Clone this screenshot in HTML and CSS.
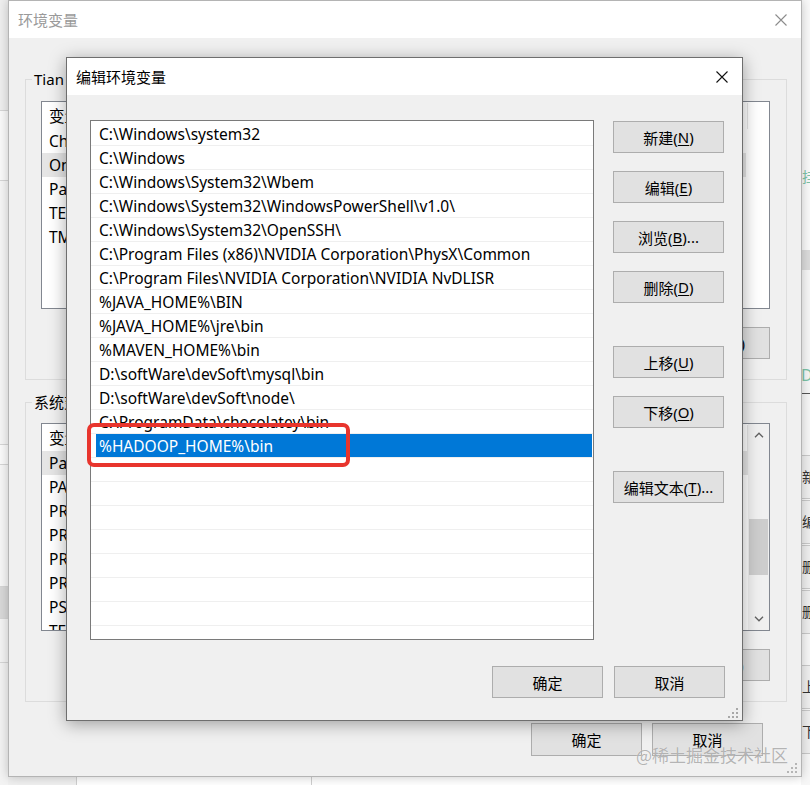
FILE: index.html
```html
<!DOCTYPE html>
<html lang="zh-CN">
<head>
<meta charset="utf-8">
<title>编辑环境变量</title>
<link rel="stylesheet" href="styles.css">
</head>
<body>
<div class="desktop">
  <div class="bg-left">
    <div class="bl bl-1"></div>
    <div class="bl bl-2"></div>
    <div class="bl bl-3"></div>
    <div class="bl bl-4"></div>
    <div class="bl bl-5"></div>
    <div class="bl bl-6"></div>
    <div class="bl bl-7"></div>
  </div>
  <div class="bg-mid">
    <div class="bg-bottom">
      <div class="bb-a"></div>
      <div class="bb-b"></div>
      <div class="bb-c"></div>
    </div>
  </div>
  <div class="bg-right">
    <div class="br br-top"></div>
    <div class="br br-green">挂</div>
    <div class="br br-band"></div>
    <div class="br br-gap"></div>
    <div class="br br-green2">D:</div>
    <div class="br br-dark"></div>
    <div class="br br-btn">新建</div>
    <div class="br br-btn">编辑</div>
    <div class="br br-btn">删除</div>
    <div class="br br-btn">删除</div>
    <div class="br br-gap2"></div>
    <div class="br br-btn">上移</div>
    <div class="br br-btn">下移</div>
  </div>
</div>

<div class="win outer">
  <div class="titlebar">
    <span class="title inactive">环境变量</span>
    <svg class="close" width="12" height="12" viewBox="0 0 12 12"><path d="M0.5 0.5 L11.5 11.5 M11.5 0.5 L0.5 11.5" stroke="#8c8c8c" stroke-width="1.1" fill="none"/></svg>
  </div>
  <div class="obody">
    <fieldset class="group g1">
      <legend>Tian 的用户变量(<u>U</u>)</legend>
      <div class="lv">
        <div class="lv-head"><span class="c1">变量</span><span class="c2">值</span></div>
        <div class="lv-rows">
          <div class="lv-row"><span class="c1">ChocolateyLastPathUpdate</span></div>
          <div class="lv-row hl"><span class="c1">OneDrive</span></div>
          <div class="lv-row"><span class="c1">Path</span></div>
          <div class="lv-row"><span class="c1">TEMP</span></div>
          <div class="lv-row"><span class="c1">TMP</span></div>
        </div>
      </div>
      <div class="btnrow">
        <button class="btn obtn">新建(<u>N</u>)...</button>
        <button class="btn obtn">编辑(<u>E</u>)...</button>
        <button class="btn obtn">删除(<u>D</u>)</button>
      </div>
    </fieldset>
    <fieldset class="group g2">
      <legend>系统变量(<u>S</u>)</legend>
      <div class="lv lv2">
        <div class="lv-main">
          <div class="lv-head"><span class="c1">变量</span><span class="c2">值</span></div>
          <div class="lv-rows">
            <div class="lv-row hl"><span class="c1">Path</span></div>
            <div class="lv-row"><span class="c1">PATHEXT</span></div>
            <div class="lv-row"><span class="c1">PROCESSOR_ARCHITECTURE</span></div>
            <div class="lv-row"><span class="c1">PROCESSOR_IDENTIFIER</span></div>
            <div class="lv-row"><span class="c1">PROCESSOR_LEVEL</span></div>
            <div class="lv-row"><span class="c1">PROCESSOR_REVISION</span></div>
            <div class="lv-row"><span class="c1">PSModulePath</span></div>
            <div class="lv-row"><span class="c1">TEMP</span></div>
          </div>
        </div>
        <div class="vscroll">
          <svg class="arrow" width="10" height="6" viewBox="0 0 10 6"><path d="M1 5.2 L5 1.2 L9 5.2" stroke="#606060" stroke-width="1.3" fill="none"/></svg>
          <div class="track"><div class="thumb"></div></div>
          <svg class="arrow" width="10" height="6" viewBox="0 0 10 6"><path d="M1 0.8 L5 4.8 L9 0.8" stroke="#606060" stroke-width="1.3" fill="none"/></svg>
        </div>
      </div>
      <div class="btnrow">
        <button class="btn obtn">新建(<u>W</u>)...</button>
        <button class="btn obtn">编辑(<u>I</u>)...</button>
        <button class="btn obtn">删除(<u>L</u>)</button>
      </div>
    </fieldset>
    <div class="ofoot">
      <button class="btn">确定</button>
      <button class="btn">取消</button>
    </div>
  </div>
  <svg class="grip ogrip" width="11" height="11" viewBox="0 0 11 11"><g fill="#b5b5b5"><rect x="8" y="0" width="2" height="2"/><rect x="4" y="4" width="2" height="2"/><rect x="8" y="4" width="2" height="2"/><rect x="0" y="8" width="2" height="2"/><rect x="4" y="8" width="2" height="2"/><rect x="8" y="8" width="2" height="2"/></g></svg>
</div>

<div class="win inner">
  <div class="titlebar">
    <span class="title">编辑环境变量</span>
    <svg class="close" width="12" height="12" viewBox="0 0 12 12"><path d="M0.5 0.5 L11.5 11.5 M11.5 0.5 L0.5 11.5" stroke="#111" stroke-width="1.1" fill="none"/></svg>
  </div>
  <div class="ibody">
    <div class="imain">
      <div class="plist">
        <div class="prow"><span>C:\Windows\system32</span></div>
        <div class="prow"><span>C:\Windows</span></div>
        <div class="prow"><span>C:\Windows\System32\Wbem</span></div>
        <div class="prow"><span>C:\Windows\System32\WindowsPowerShell\v1.0\</span></div>
        <div class="prow"><span>C:\Windows\System32\OpenSSH\</span></div>
        <div class="prow"><span>C:\Program Files (x86)\NVIDIA Corporation\PhysX\Common</span></div>
        <div class="prow"><span>C:\Program Files\NVIDIA Corporation\NVIDIA NvDLISR</span></div>
        <div class="prow"><span>%JAVA_HOME%\BIN</span></div>
        <div class="prow"><span>%JAVA_HOME%\jre\bin</span></div>
        <div class="prow"><span>%MAVEN_HOME%\bin</span></div>
        <div class="prow"><span>D:\softWare\devSoft\mysql\bin</span></div>
        <div class="prow"><span>D:\softWare\devSoft\node\</span></div>
        <div class="prow"><span>C:\ProgramData\chocolatey\bin</span></div>
        <div class="prow sel"><span>%HADOOP_HOME%\bin</span></div>
        <div class="prow"><span></span></div>
        <div class="prow"><span></span></div>
        <div class="prow"><span></span></div>
        <div class="prow"><span></span></div>
        <div class="prow"><span></span></div>
        <div class="prow"><span></span></div>
        <div class="prow"><span></span></div>
        <div class="prow"><span></span></div>
      </div>
      <div class="side">
        <div class="sgroup">
          <button class="btn">新建(<u>N</u>)</button>
          <button class="btn">编辑(<u>E</u>)</button>
          <button class="btn">浏览(<u>B</u>)...</button>
          <button class="btn">删除(<u>D</u>)</button>
        </div>
        <div class="sgroup">
          <button class="btn">上移(<u>U</u>)</button>
          <button class="btn">下移(<u>O</u>)</button>
        </div>
        <div class="sgroup">
          <button class="btn">编辑文本(<u>T</u>)...</button>
        </div>
      </div>
    </div>
    <div class="ifoot">
      <button class="btn">确定</button>
      <button class="btn">取消</button>
    </div>
  </div>
  <div class="mark"></div>
  <svg class="grip igrip" width="11" height="11" viewBox="0 0 11 11"><g fill="#a8a8a8"><rect x="8" y="0" width="2" height="2"/><rect x="4" y="4" width="2" height="2"/><rect x="8" y="4" width="2" height="2"/><rect x="0" y="8" width="2" height="2"/><rect x="4" y="8" width="2" height="2"/><rect x="8" y="8" width="2" height="2"/></g></svg>
</div>

<div class="watermark">@稀土掘金技术社区</div>
</body>
</html>
```

FILE: styles.css
```css
* { box-sizing: border-box; }
html, body { margin: 0; padding: 0; }
body {
  width: 810px;
  height: 785px;
  overflow: hidden;
  position: relative;
  background: #ffffff;
  font-family: "Noto Sans", "Noto Sans CJK SC", sans-serif;
  font-size: 15px;
  color: #000;
}

/* ---------- desktop behind the dialogs ---------- */
.desktop {
  display: grid;
  grid-template-columns: 8px 793px 9px;
  height: 785px;
}
.bg-left { background: #f3f3f3; display: flex; flex-direction: column; }
.bl { border-bottom: 1px solid #d6d6d6; }
.bl-1 { height: 111px; background: #efefef; }
.bl-2 { height: 70px; background: #fafafa; }
.bl-3 { height: 264px; background: #f6f6f6; }
.bl-4 { height: 20px; background: #fbfbfb; }
.bl-5 { height: 122px; background: #f7f7f7; }
.bl-6 { height: 32px; background: #d9d9d9; }
.bl-7 { height: 44px; background: #f4f4f4; }

.bg-mid { display: flex; flex-direction: column; justify-content: flex-end; background: #f7f7f7; }
.bg-bottom { height: 9px; display: flex; }
.bb-a { width: 68px; background: #f0f0f0; }
.bb-b { width: 236px; background: #fff; border-left: 1px solid #cfcfcf; border-right: 1px solid #cfcfcf; }
.bb-c { flex: 1; background: #fff; }

.bg-right { background: #f7f7f7; display: flex; flex-direction: column; overflow: hidden; }
.br { white-space: nowrap; font-size: 14px; line-height: 20px; padding-left: 1px; }
.br-top { height: 167px; background: #fafafa; }
.br-green { height: 20px; color: #7cc4a8; background: #fafafa; }
.br-band { height: 83px; background: #fafafa; border-bottom: 20px solid #dcdcdc; }
.br-gap { height: 95px; }
.br-green2 { height: 28px; color: #7cc4a8; font-size: 16px; padding-left: 0; }
.br-dark { height: 62px; border-top: 1px solid #555; }
.br-btn { height: 44px; border-top: 1px solid #c9c9c9; border-bottom: 1px solid #c9c9c9; margin-bottom: 1px; line-height: 42px; color: #333; background: #efefef; }
.br-gap2 { height: 30px; }

/* ---------- windows ---------- */
.win {
  position: absolute;
  background: #f0f0f0;
  display: flex;
  flex-direction: column;
}
.titlebar {
  height: 37px;
  flex: none;
  background: #fff;
  display: flex;
  align-items: center;
  justify-content: space-between;
  padding: 0 15px 0 9px;
}
.title { font-size: 15px; line-height: 20px; }
.title.inactive { color: #9a9a9a; }
.close { display: block; }

.outer {
  left: 8px;
  top: 0;
  width: 794px;
  height: 777px;
  border: 1px solid #b4b4b4;
  box-shadow: 0 0 10px rgba(0, 0, 0, 0.22);
}
.outer .titlebar { padding-right: 14px; }

.obody { padding: 31px 14px 0 16px; display: flex; flex-direction: column; }

.group {
  margin: 0;
  border: 1px solid #dcdcdc;
  min-width: 0;
}
.group legend {
  padding: 0 2px;
  margin-left: -9px;
  line-height: 20px;
  font-size: 15px;
  color: #000;
}
.g1 { padding: 12px 16px 20px 15px; }
.g2 { margin-top: 12px; padding: 11px 16px 20px 15px; }

.lv {
  height: 208px;
  background: #fff;
  border: 1px solid #828790;
  overflow: hidden;
  display: flex;
  font-size: 15.5px;
}
.g1 .lv { flex-direction: column; }
.lv-main { flex: 1; display: flex; flex-direction: column; }
.lv-head {
  height: 27px;
  display: flex;
  align-items: center;
  flex: none;
  padding-right: 21px;
}
.lv-head .c1 { width: 200px; padding-left: 7px; border-right: 1px solid #e5e5e5; line-height: 26px; }
.lv-head .c2 { flex: 1; padding-left: 7px; border-right: 1px solid #e5e5e5; line-height: 26px; }
.lv2 .lv-head { padding-right: 0; }
.lv-rows { display: flex; flex-direction: column; padding-right: 23px; }
.lv2 .lv-rows { padding-right: 0; }
.lv-row { height: 24px; display: flex; align-items: center; white-space: nowrap; }
.lv-row .c1 { padding-left: 7px; line-height: 24px; }
.lv-row.hl { background: #e5e5e5; }

.vscroll {
  width: 21px;
  flex: none;
  background: #f0f0f0;
  display: flex;
  flex-direction: column;
  align-items: center;
  padding: 8px 0 8px;
}
.vscroll .arrow { display: block; flex: none; }
.track { flex: 1; width: 100%; display: flex; flex-direction: column; justify-content: flex-start; padding: 81px 1px 0 0; }
.thumb { height: 56px; background: #cdcdcd; margin-left: 1px; }

.btnrow {
  margin-top: 18px;
  display: flex;
  justify-content: flex-end;
  gap: 10px;
}

.btn {
  width: 111px;
  height: 32px;
  flex: none;
  margin: 0;
  padding: 0;
  background: #e1e1e1;
  border: 1px solid #adadad;
  border-radius: 0;
  font-family: "Noto Sans", "Noto Sans CJK SC", sans-serif;
  font-size: 15px;
  color: #000;
  display: flex;
  align-items: center;
  justify-content: center;
  white-space: nowrap;
}
.btn u { text-underline-offset: 2px; }
.obtn { width: 100px; }

.ofoot {
  margin-top: 21px;
  display: flex;
  justify-content: flex-end;
  gap: 10px;
  padding-right: 24px;
}
.ofoot .btn { height: 33px; }

.grip { position: absolute; display: block; }
.ogrip { right: 3px; bottom: 2px; }
.igrip { right: 3px; bottom: 1px; }

/* ---------- inner dialog ---------- */
.inner {
  left: 66px;
  top: 57px;
  width: 677px;
  height: 664px;
  border: 1px solid #6e6e6e;
  box-shadow: 0 3px 16px rgba(0, 0, 0, 0.35);
}
.inner .titlebar { padding-right: 14px; }
.ibody { padding: 25px 17px 0 23px; display: flex; flex-direction: column; }
.imain { display: flex; }
.plist {
  width: 504px;
  height: 520px;
  background: #fff;
  border: 1px solid #7a7a7a;
  padding-top: 1px;
  overflow: hidden;
  display: flex;
  flex-direction: column;
  font-size: 15.5px;
}
.prow {
  height: 24px;
  flex: none;
  border-bottom: 1px solid #efefef;
  padding: 0 1px 0 5px;
  display: flex;
}
.prow span {
  flex: 1;
  padding-left: 3px;
  line-height: 24px;
  white-space: nowrap;
}
.prow.sel span { background: #0078d7; color: #fff; }

.side {
  margin-left: 19px;
  padding-top: 1px;
  display: flex;
  flex-direction: column;
  gap: 43px;
}
.sgroup { display: flex; flex-direction: column; gap: 18px; }

.ifoot {
  margin-top: 26px;
  display: flex;
  justify-content: flex-end;
  gap: 11px;
}

.mark {
  position: absolute;
  left: 20px;
  top: 365px;
  width: 263px;
  height: 44px;
  border: 4px solid #e8352d;
  border-radius: 7px;
}

.watermark {
  position: absolute;
  left: 636px;
  top: 743px;
  font-family: "Noto Sans CJK SC", sans-serif;
  font-size: 17px;
  line-height: 24px;
  color: rgba(120, 120, 120, 0.55);
  text-shadow: 0 0 1px rgba(255, 255, 255, 0.8);
  white-space: nowrap;
}
```
